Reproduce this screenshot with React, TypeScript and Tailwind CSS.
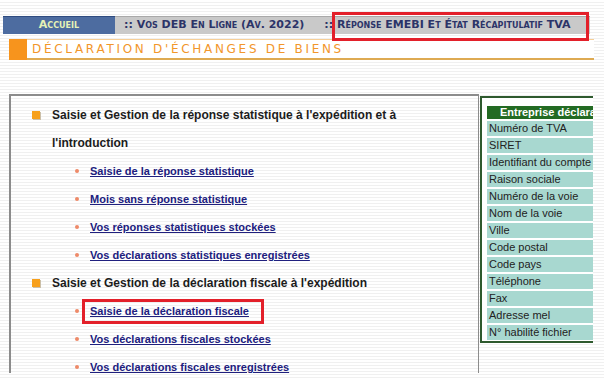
import React from 'react';

const statLinks = [
  'Saisie de la réponse statistique',
  'Mois sans réponse statistique',
  'Vos réponses statistiques stockées',
  'Vos déclarations statistiques enregistrées',
];

const fiscalLinks = [
  'Saisie de la déclaration fiscale',
  'Vos déclarations fiscales stockées',
  'Vos déclarations fiscales enregistrées',
];

const companyFields = [
  'Numéro de TVA',
  'SIRET',
  'Identifiant du compte',
  'Raison sociale',
  'Numéro de la voie',
  'Nom de la voie',
  'Ville',
  'Code postal',
  'Code pays',
  'Téléphone',
  'Fax',
  'Adresse mel',
  'N° habilité fichier',
];

function Heading({ children }: { children: React.ReactNode }) {
  return (
    <div className="flex pl-[21px] text-[12px] leading-[28px]">
      <span className="mt-[10px] mr-[12px] h-[8px] w-[8px] shrink-0 bg-[#f7a01c] shadow-[1px_1px_0_#cbbfa8]" />
      <div className="font-bold text-[#1c1c1c]">{children}</div>
    </div>
  );
}

function LinkRow({ label, marked }: { label: string; marked?: boolean }) {
  return (
    <div className="flex h-[28px] items-center pl-[64px] text-[11px] leading-[28px]">
      <span className="mr-[11px] h-[4px] w-[4px] shrink-0 rounded-full bg-[#ee8a68]" />
      <span className="relative">
        <a href="#" className="font-bold text-[#20207e] underline">
          {label}
        </a>
        {marked && (
          <span className="absolute -left-[8px] -right-[15px] top-[2px] h-[25px] border-[3px] border-[#e3202a]" />
        )}
      </span>
    </div>
  );
}

export default function App() {
  return (
    <div className="relative h-[380px] w-[604px] overflow-hidden bg-[repeating-linear-gradient(180deg,#ffffff_0px,#ffffff_2px,#f0f0f0_2px,#f0f0f0_3px)] font-['Liberation_Sans',Arial,sans-serif]">
      {/* Top navigation */}
      <div className="pl-[3px] pt-[16px]">
        <div className="flex h-[18px] w-[587px] font-['DejaVu_Sans',Verdana,sans-serif] text-[11px] font-bold [font-variant:small-caps]">
          <div className="flex w-[112px] items-center justify-center border-t border-[#2f4c80] bg-[#4d6ca0] text-[#e6f3b6]">
            Accueil
          </div>
          <div className="flex flex-1 items-center border-t border-[#a9a9a9] bg-[#c9c9c9] pl-[9px] text-[#2c3468]">
            <span>:: Vos DEB En Ligne (Av. 2022)</span>
            <span className="ml-[20px]">:: Réponse EMEBI Et État Récapitulatif TVA</span>
          </div>
        </div>
      </div>
      <div className="absolute left-[332px] top-[12px] h-[29px] w-[257px] border-[3px] border-[#e3202a]" />

      {/* Title bar */}
      <div className="ml-[9px] mt-[5px] flex h-[21px] w-[585px]">
        <div className="w-[18px] bg-[#f7941d]" />
        <div className="flex flex-1 items-center border-t border-b-2 border-t-[#f6cf98] border-b-[#deaa52] bg-white pl-[5px] font-['DejaVu_Sans',Verdana,sans-serif] text-[12px] tracking-[2.7px] text-[#f2962a]">
          DÉCLARATION D'ÉCHANGES DE BIENS
        </div>
      </div>

      {/* Main */}
      <div className="ml-[9px] mt-[34px] flex h-[279px]">
        <div className="w-[470px] border-l-2 border-r border-t-2 border-[#8c8c8c] pt-[5px]">
          <Heading>
            Saisie et Gestion de la réponse statistique à l'expédition et à
            <br />
            l'introduction
          </Heading>
          {statLinks.map((l) => (
            <LinkRow key={l} label={l} />
          ))}
          <Heading>Saisie et Gestion de la déclaration fiscale à l'expédition</Heading>
          {fiscalLinks.map((l, i) => (
            <LinkRow key={l} label={l} marked={i === 0} />
          ))}
        </div>
        <div className="ml-[1px] mt-[2px] w-[113px] self-start overflow-hidden">
          <div className="w-[200px] border-b-2 border-l-2 border-t-2 border-[#2e5a2e] bg-white pb-[1px] pl-[5px] pt-[8px]">
            <div className="h-[13px] bg-[#236b23] pl-[13px] text-[11px] font-bold leading-[13px] text-white">
              Entreprise déclarante
            </div>
            {companyFields.map((f) => (
              <div key={f} className="mt-[2px] h-[15px] bg-[#a8d8d0] pl-[2px] text-[11px] leading-[15px] text-[#222]">
                {f}
              </div>
            ))}
          </div>
        </div>
      </div>
    </div>
  );
}
